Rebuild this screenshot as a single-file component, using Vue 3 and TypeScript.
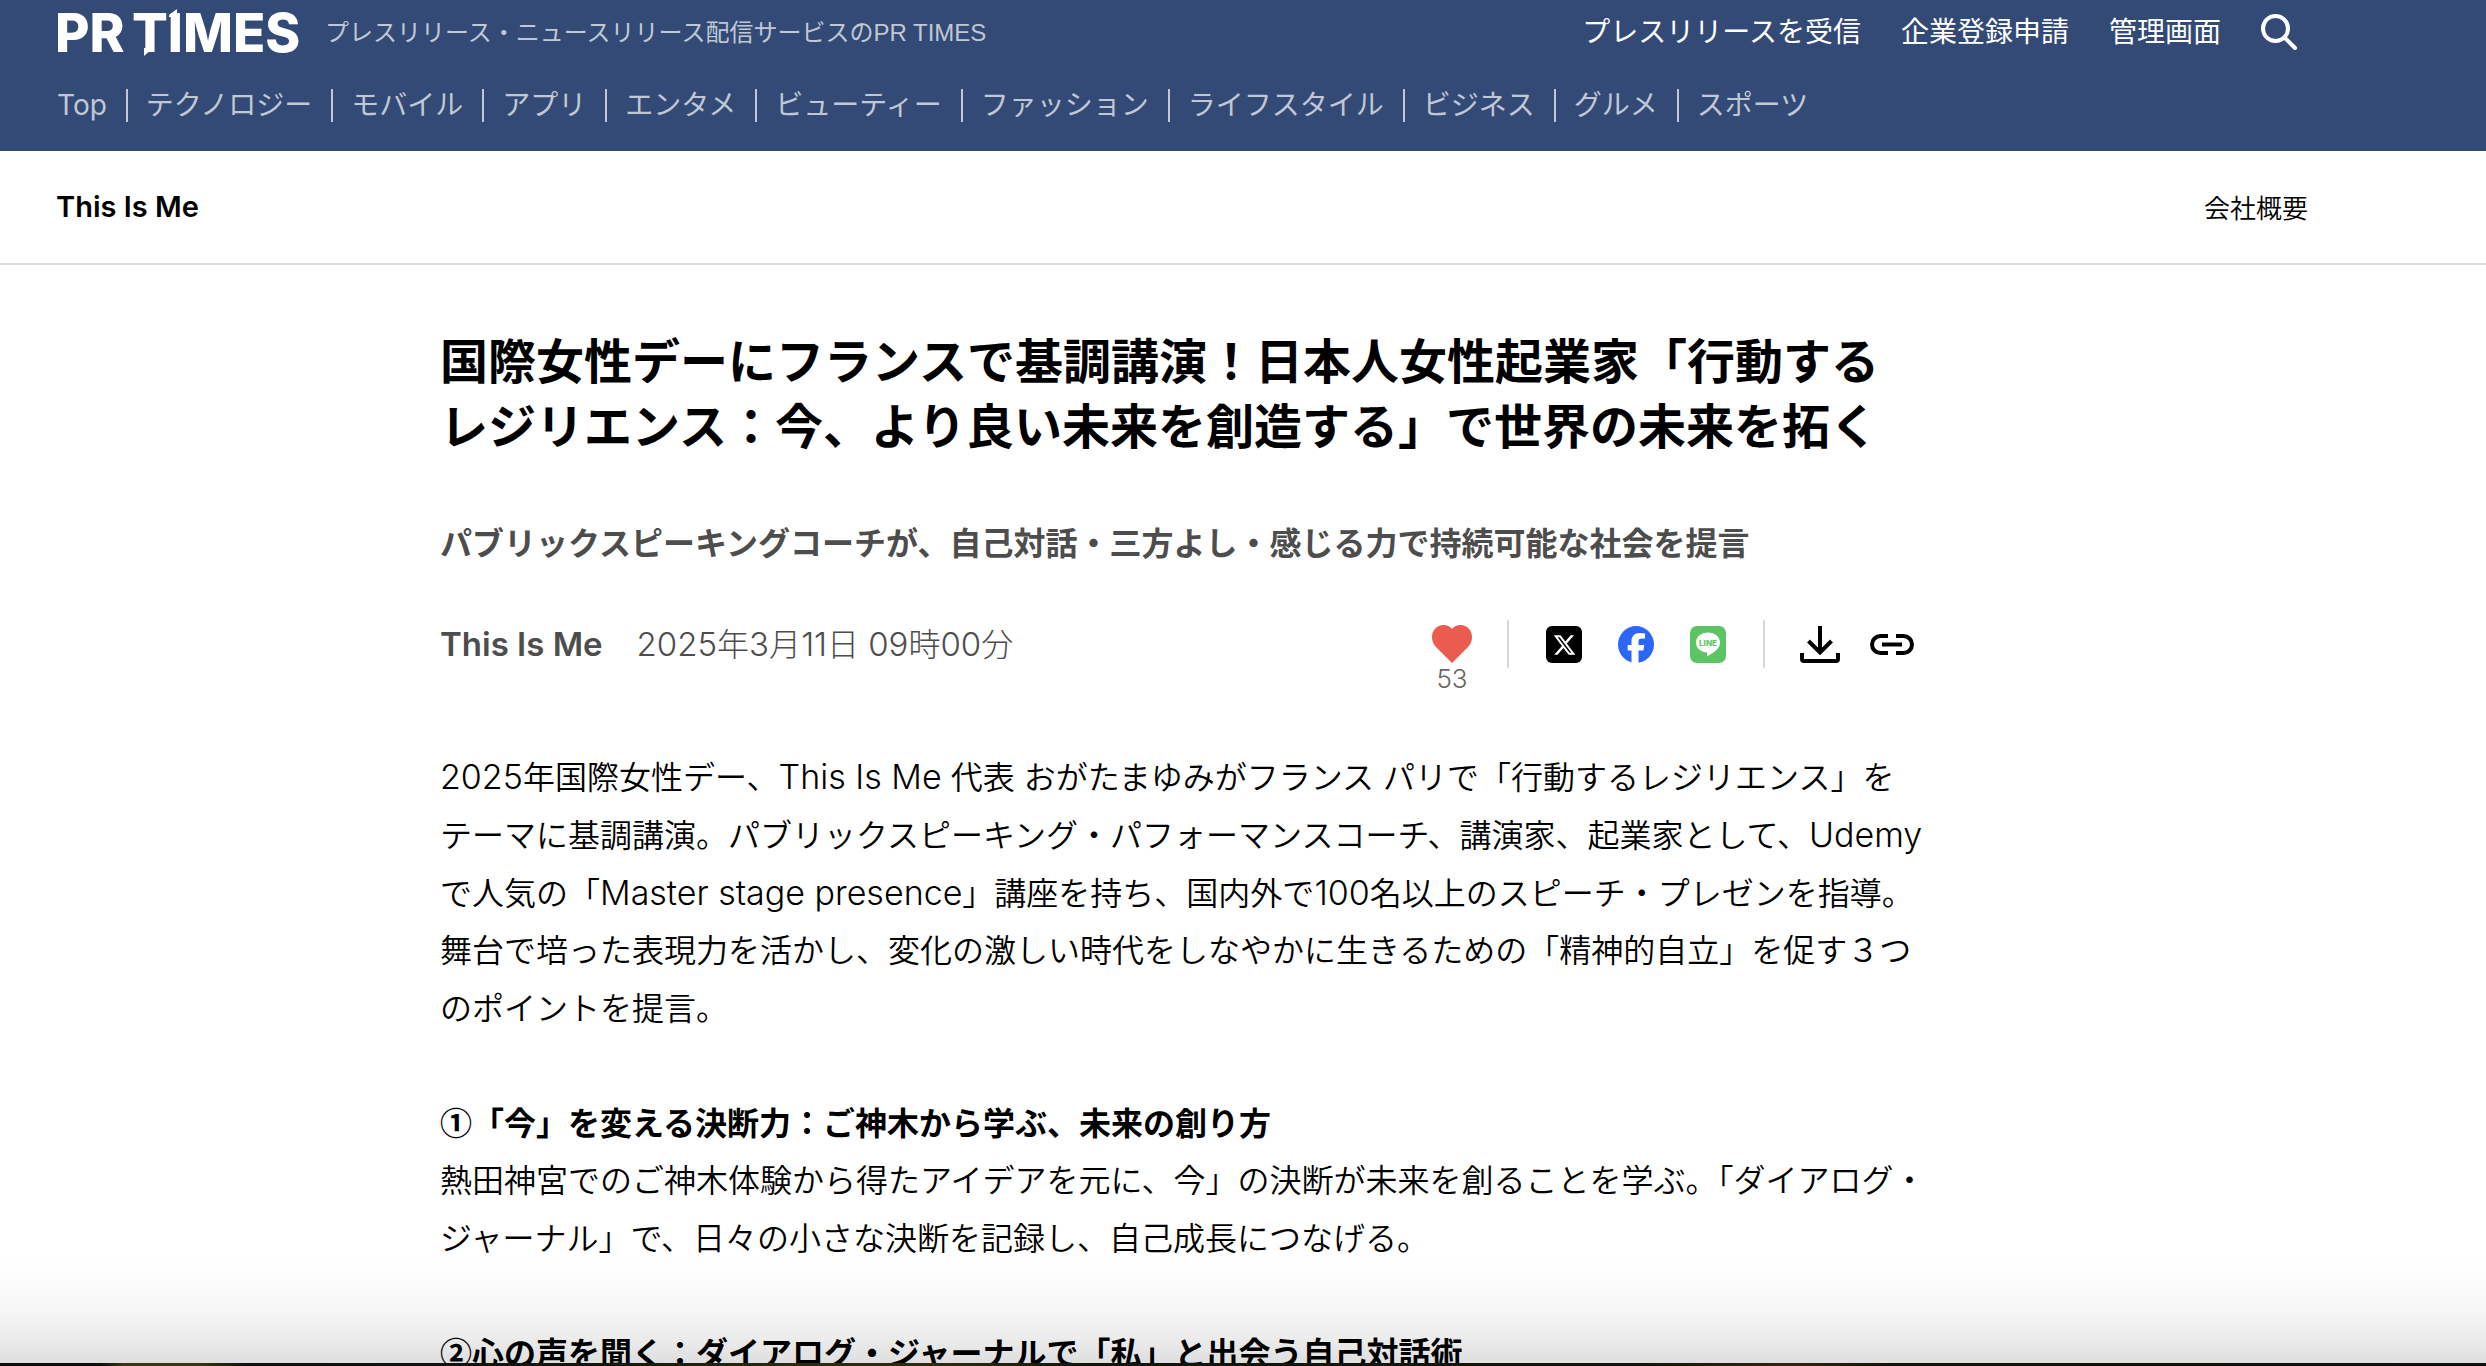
<script setup lang="ts">
import { ref } from 'vue'

interface Section {
  heading?: string
  lines: string[]
}

interface Run {
  text: string
  latin: boolean
}

const categories: string[] = [
  'Top', 'テクノロジー', 'モバイル', 'アプリ', 'エンタメ', 'ビューティー',
  'ファッション', 'ライフスタイル', 'ビジネス', 'グルメ', 'スポーツ',
]

const utilityLinks: string[] = ['プレスリリースを受信', '企業登録申請', '管理画面']

const titleLines: string[] = [
  '国際女性デーにフランスで基調講演！日本人女性起業家「行動する',
  'レジリエンス：今、より良い未来を創造する」で世界の未来を拓く',
]

const sections: Section[] = [
  {
    lines: [
      '2025年国際女性デー、This Is Me 代表 おがたまゆみがフランス パリで「行動するレジリエンス」を',
      'テーマに基調講演。パブリックスピーキング・パフォーマンスコーチ、講演家、起業家として、Udemy',
      'で人気の「Master stage presence」講座を持ち、国内外で100名以上のスピーチ・プレゼンを指導。',
      '舞台で培った表現力を活かし、変化の激しい時代をしなやかに生きるための「精神的自立」を促す３つ',
      'のポイントを提言。',
    ],
  },
  {
    heading: '①「今」を変える決断力：ご神木から学ぶ、未来の創り方',
    lines: [
      '熱田神宮でのご神木体験から得たアイデアを元に、今」の決断が未来を創ることを学ぶ。「ダイアログ・',
      'ジャーナル」で、日々の小さな決断を記録し、自己成長につなげる。',
    ],
  },
  {
    heading: '②心の声を聞く：ダイアログ・ジャーナルで「私」と出会う自己対話術',
    lines: [],
  },
]

// Latin words and digits are set slightly larger than the Japanese around them.
function toRuns(text: string): Run[] {
  return text
    .split(/([A-Za-z0-9]+(?: [A-Za-z0-9]+)*)/)
    .filter((part) => part !== '')
    .map((part) => ({ text: part, latin: /^[A-Za-z0-9]/.test(part) }))
}

const likes = ref(53)
</script>

<template>
  <div class="page">
    <header class="site-header">
      <div class="header-top">
        <a class="logo" href="#" aria-label="PR TIMES">
          <svg width="248" height="48" viewBox="0 0 248 48" fill="#fff">
            <text x="0" y="44" class="wordmark">PR</text>
            <text x="77" y="44" class="wordmark">TIMES</text>
            <path d="M89 40h8v1l-8 7z" />
            <path d="M114 9V7l8-6v8z" />
          </svg>
        </a>
        <p class="tagline">プレスリリース・ニュースリリース配信サービスのPR TIMES</p>
        <nav class="utility">
          <a v-for="link in utilityLinks" :key="link" href="#">{{ link }}</a>
          <button type="button" class="search" aria-label="検索">
            <svg width="36" height="36" viewBox="0 0 36 36" fill="none" stroke="#fff" stroke-width="4">
              <circle cx="14.500" cy="14.500" r="12.500" />
              <path d="M23.500 23.500 34 34" stroke-linecap="round" />
            </svg>
          </button>
        </nav>
      </div>
      <nav class="categories">
        <a v-for="category in categories" :key="category" href="#">{{ category }}</a>
      </nav>
    </header>

    <div class="company-bar">
      <a href="#" class="company-name">This Is Me</a>
      <a href="#" class="company-about">会社概要</a>
    </div>

    <main>
      <article>
        <h1>
          <span v-for="line in titleLines" :key="line" class="line">{{ line }}</span>
        </h1>
        <p class="subtitle">パブリックスピーキングコーチが、自己対話・三方よし・感じる力で持続可能な社会を提言</p>

        <div class="meta">
          <a href="#" class="author">This Is Me</a>
          <time datetime="2025-03-11T09:00"><span v-for="(run, k) in toRuns('2025年3月11日 09時00分')" :key="k" :class="{ numeral: run.latin }">{{ run.text }}</span></time>
          <div class="actions">
            <button type="button" class="action like" aria-label="いいね" @click="likes++">
              <svg width="40" height="38" viewBox="0 0 40 38">
                <path fill="#ea5b50" d="M20 38 4.500 22.500C1.500 19.500 0 16 0 12 0 5 5 0 11.500 0c3.500 0 6.500 1.500 8.500 4 2-2.500 5-4 8.500-4C35 0 40 5 40 12c0 4-1.500 7.500-4.500 10.500z" />
              </svg>
              <span class="count">{{ likes }}</span>
            </button>
            <span class="divider"></span>
            <a href="#" class="action" aria-label="X">
              <svg width="36" height="37" viewBox="0 0 36 37">
                <rect width="36" height="37" rx="6" />
                <path fill="#fff" transform="translate(6.500 7)" d="M18.244 2.250h3.308l-7.227 8.260 8.502 11.240H16.170l-5.214-6.817L4.990 21.750H1.680l7.730-8.835L1.254 2.250H8.080l4.713 6.231zm-1.161 17.520h1.833L7.084 4.126H5.117z" />
              </svg>
            </a>
            <a href="#" class="action" aria-label="Facebook">
              <svg width="36" height="37" viewBox="0 0 36 37">
                <ellipse cx="18" cy="18.500" rx="18" ry="18.500" fill="#2b66f6" />
                <path fill="#fff" d="M13.500 37V24.500H9.700V19h3.800v-3.500C13.500 10 16.500 7 22 7c1.700 0 3.500.2 5 .6v5h-3c-2.500 0-3.500 1.200-3.500 3.200V19h5.800l-1 5.500h-4.800V37z" />
              </svg>
            </a>
            <a href="#" class="action" aria-label="LINE">
              <svg width="36" height="37" viewBox="0 0 36 37">
                <rect width="36" height="37" rx="7" fill="#5bc463" />
                <path fill="#fff" d="M18 6.500c6.700 0 12 4.300 12 10 0 5.500-5 9.500-13 14v-4C10.500 26 6 22 6 16.500c0-5.700 5.300-10 12-10z" />
                <text x="18" y="20" text-anchor="middle" class="line-mark">LINE</text>
              </svg>
            </a>
            <span class="divider"></span>
            <button type="button" class="action" aria-label="ダウンロード">
              <svg width="40" height="37" viewBox="0 0 40 37" fill="none" stroke="#000" stroke-width="4">
                <path d="M20 0v27M8.500 15 20 26.500 31.500 15M2 27v6q0 2 2 2h32q2 0 2-2v-6" />
              </svg>
            </button>
            <button type="button" class="action" aria-label="リンクをコピー">
              <svg width="44" height="21" viewBox="0 0 44 21" fill="none" stroke="#000" stroke-width="4">
                <path d="M18 2h-7.500a8.500 8.500 0 0 0 0 17H18M26 2h7.500a8.500 8.500 0 0 1 0 17H26M12 10.500h20" />
              </svg>
            </button>
          </div>
        </div>

        <section v-for="(section, i) in sections" :key="i">
          <h2 v-if="section.heading">{{ section.heading }}</h2>
          <p v-if="section.lines.length">
            <span v-for="line in section.lines" :key="line" class="line"><span v-for="(run, k) in toRuns(line)" :key="k" :class="{ latin: run.latin }">{{ run.text }}</span></span>
          </p>
        </section>
      </article>
    </main>

    <div class="bottom-edge">
      <div class="shade"></div>
      <div class="strip"></div>
    </div>
  </div>
</template>

<style>
body {
  margin: 0;
  background: #fff;
}
</style>

<style scoped>
.page {
  position: relative;
  height: 100vh;
  overflow: hidden;
  color: #000;
  font-family: Inter, "Noto Sans CJK JP", sans-serif;
  font-optical-sizing: none;
}

a {
  color: inherit;
  text-decoration: none;
}

button {
  padding: 0;
  border: 0;
  background: none;
  font: inherit;
  color: inherit;
  cursor: pointer;
}

svg {
  display: block;
  overflow: visible;
}

h1,
h2,
p {
  margin: 0;
}

.line {
  display: block;
  white-space: pre;
}

.site-header {
  box-sizing: border-box;
  height: 151px;
  padding: 8px 189px 0 55px;
  background: #324a75;
}

.header-top {
  display: flex;
  align-items: center;
  height: 48px;
}

.wordmark {
  font: 800 53px Inter, sans-serif;
}

.tagline {
  margin-left: 22px;
  padding-top: 2px;
  color: #c1c8d5;
  font-family: "Liberation Sans", "Noto Sans CJK JP", sans-serif;
  font-size: 24px;
  line-height: 32px;
  white-space: nowrap;
}

.utility {
  display: flex;
  align-items: center;
  gap: 40px;
  margin-left: auto;
  color: #fff;
  font-size: 28px;
  line-height: 32px;
  white-space: nowrap;
}

.categories {
  display: flex;
  margin-top: 33px;
  padding-left: 2px;
  color: #c1c8d5;
  font-size: 28px;
  line-height: 33px;
  white-space: nowrap;
}

.categories a {
  padding: 0 19px 0 18px;
  border-right: 2px solid #c1c8d5;
}

.categories a:first-child {
  padding-left: 0;
}

.categories a:last-child {
  border-right: 0;
}

.company-bar {
  display: flex;
  align-items: center;
  justify-content: space-between;
  height: 112px;
  padding: 0 178px 0 56px;
  border-bottom: 2px solid #dedede;
}

.company-name {
  font-size: 29px;
  font-weight: 600;
  line-height: 32px;
}

.company-about {
  font-family: "Noto Sans CJK JP", sans-serif;
  font-size: 26px;
  font-weight: 350;
  line-height: 32px;
}

main {
  padding: 64px 130px 0 0;
}

article {
  width: 1476px;
  margin: 0 auto;
}

h1 {
  font-size: 48px;
  font-weight: 700;
  line-height: 65px;
}

.subtitle {
  margin-top: 61px;
  color: #4d4d4d;
  font-size: 32px;
  font-weight: 700;
  line-height: 48px;
  white-space: nowrap;
}

.meta {
  display: flex;
  align-items: center;
  height: 48px;
  margin: 52px 0 80px;
  color: #4d4d4d;
}

.author {
  font-size: 33px;
  font-weight: 600;
}

time {
  margin-left: 34px;
  font-size: 32px;
  font-weight: 300;
  line-height: 48px;
  white-space: pre;
}

.numeral {
  font-size: 33px;
}

.actions {
  display: flex;
  align-items: center;
  gap: 24px;
  margin-left: auto;
}

.action {
  position: relative;
  display: flex;
  align-items: center;
  justify-content: center;
  width: 48px;
  height: 48px;
}

.count {
  position: absolute;
  top: 44px;
  left: 0;
  width: 100%;
  color: #666;
  font-size: 26px;
  font-weight: 300;
  line-height: 30px;
  text-align: center;
}

.divider {
  width: 2px;
  height: 48px;
  margin: 0 7px;
  background: #d8d8d8;
}

.line-mark {
  fill: #5bc463;
  font: 800 8px Inter, sans-serif;
}

section {
  margin-bottom: 56px;
  font-size: 32px;
  font-weight: 350;
  line-height: 58px;
}

section .line {
  height: 58px;
}

.latin {
  font-size: 34px;
}

h2 {
  margin-bottom: 4px;
  font-family: "Noto Sans CJK JP", sans-serif;
  font-size: 32px;
  font-weight: 700;
  line-height: 54px;
  white-space: nowrap;
}

.bottom-edge {
  position: absolute;
  right: 0;
  bottom: 0;
  left: 0;
  pointer-events: none;
}

.shade {
  height: 104px;
  background: linear-gradient(rgba(0, 0, 0, 0), rgba(0, 0, 0, 0.01) 20%, rgba(0, 0, 0, 0.04) 52%, rgba(0, 0, 0, 0.08) 78%, rgba(0, 0, 0, 0.13));
}

.strip {
  height: 3px;
  background: linear-gradient(90deg, #0a0f0a 0, #0a0f0a 4%, #3a3410 5%, #3a3410 8%, #0c120c 10%, #14160c 24%, #2c2a10 32%, #2e2a10 38%, #10160c 44%, #14160a 66%, #33240f 72%, #14140a 76%, #0c100a 100%);
}
</style>
